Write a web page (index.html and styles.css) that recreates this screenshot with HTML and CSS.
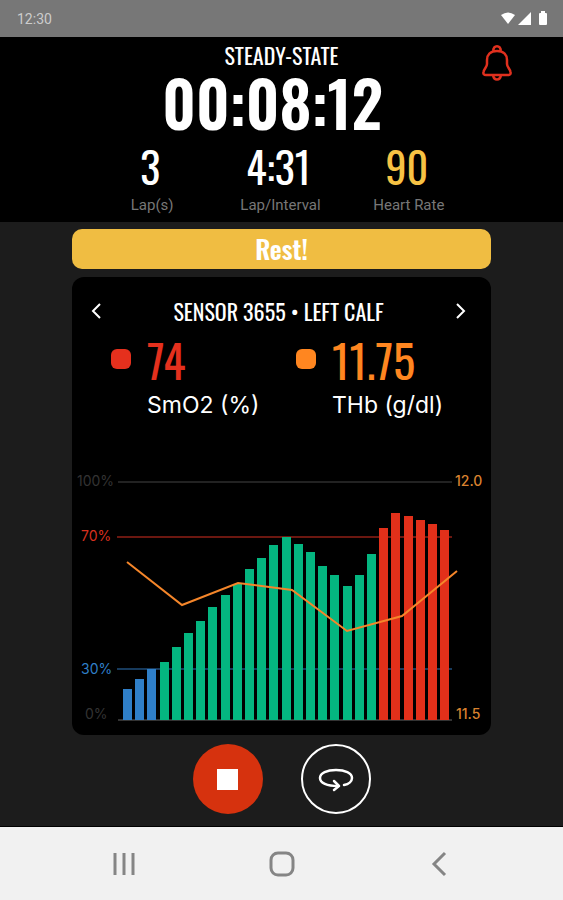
FILE: index.html
```html
<!DOCTYPE html>
<html lang="en">
<head>
    <meta charset="UTF-8">
    <meta name="viewport" content="width=device-width, initial-scale=1.0">
    <title>Steady-State</title>
    <link rel="stylesheet" href="styles.css">
</head>
<body>
    <div class="status-bar">
        <span>12:30</span>
        <svg width="50" height="16" viewBox="0 0 50 16" fill="#fff" aria-hidden="true">
            <path d="M0 4 Q7 -1 14 4 L7 13 Z"/>
            <path d="M30 1 V14 H17 Z"/>
            <path d="M38 3 Q38 2 39 2 H40 V0 H44 V2 H45 Q46 2 46 3 V13 Q46 14 45 14 H39 Q38 14 38 13 Z"/>
        </svg>
    </div>

    <header class="session">
        <button class="bell" aria-label="Alerts">
            <svg width="30" height="38" viewBox="0 0 30 38" fill="none" stroke="#e0301e" stroke-width="2.500" stroke-linejoin="round">
                <path d="M11.500 7 C10.500 0.500 19.500 0.500 18.500 7"/>
                <path d="M15 7 C8 7 5 11 5 16 V20 C5 23 2 25 1.500 28 C1 30 2 31 4 31 H26 C28 31 29 30 28.500 28 C28 25 25 23 25 20 V16 C25 11 22 7 15 7 Z"/>
                <path d="M11 31 C12 37 18 37 19 31"/>
            </svg>
        </button>
        <h1>STEADY-STATE</h1>
        <div class="timer">00:08:12</div>
        <div class="stats">
            <div class="stat">
                <div class="stat-value">3</div>
                <div class="stat-label">Lap(s)</div>
            </div>
            <div class="stat">
                <div class="stat-value">4:31</div>
                <div class="stat-label">Lap/Interval</div>
            </div>
            <div class="stat">
                <div class="stat-value heart">90</div>
                <div class="stat-label">Heart Rate</div>
            </div>
        </div>
    </header>

    <main>
        <div class="rest">Rest!</div>

        <section class="card">
            <div class="sensor">
                <button aria-label="Previous sensor">
                    <svg width="10" height="16" viewBox="0 0 10 16" fill="none" stroke="#fff" stroke-width="2"><path d="M9 1 L2 8 L9 15"/></svg>
                </button>
                <h2>SENSOR 3655 • LEFT CALF</h2>
                <button aria-label="Next sensor">
                    <svg width="10" height="16" viewBox="0 0 10 16" fill="none" stroke="#fff" stroke-width="2"><path d="M1 1 L8 8 L1 15"/></svg>
                </button>
            </div>

            <div class="metrics">
                <div class="metric smo2">
                    <span class="swatch"></span>
                    <span class="metric-value">74</span>
                    <span class="metric-label">SmO2 (%)</span>
                </div>
                <div class="metric thb">
                    <span class="swatch"></span>
                    <span class="metric-value">11.75</span>
                    <span class="metric-label">THb (g/dl)</span>
                </div>
            </div>

            <svg class="chart" viewBox="0 0 419 270" role="img" aria-label="SmO2 and THb over time">
                <g stroke-width="2">
                    <path d="M46 17 H380" stroke="#222"/>
                    <path d="M45 72 H380" stroke="#6b1710"/>
                    <path d="M45 204 H380" stroke="#173a5c"/>
                    <path d="M46 255 H380" stroke="#333"/>
                </g>
                <g fill="#2f7fc8">
                    <rect x="51" y="224" width="9" height="31"/>
                    <rect x="63" y="214" width="9" height="41"/>
                    <rect x="75" y="204" width="9" height="51"/>
                </g>
                <g fill="#04b680">
                    <rect x="88" y="197" width="9" height="58"/>
                    <rect x="100" y="182" width="9" height="73"/>
                    <rect x="112" y="168" width="9" height="87"/>
                    <rect x="124" y="156" width="9" height="99"/>
                    <rect x="136" y="142" width="9" height="113"/>
                    <rect x="149" y="130" width="9" height="125"/>
                    <rect x="161" y="119" width="9" height="136"/>
                    <rect x="173" y="104" width="9" height="151"/>
                    <rect x="185" y="93" width="9" height="162"/>
                    <rect x="197" y="80" width="9" height="175"/>
                    <rect x="210" y="72" width="9" height="183"/>
                    <rect x="222" y="79" width="9" height="176"/>
                    <rect x="234" y="87" width="9" height="168"/>
                    <rect x="246" y="101" width="9" height="154"/>
                    <rect x="258" y="110" width="9" height="145"/>
                    <rect x="271" y="121" width="9" height="134"/>
                    <rect x="283" y="110" width="9" height="145"/>
                    <rect x="295" y="89" width="9" height="166"/>
                </g>
                <g fill="#e2301a">
                    <rect x="307" y="63" width="9" height="192"/>
                    <rect x="319" y="48" width="9" height="207"/>
                    <rect x="332" y="51" width="9" height="204"/>
                    <rect x="344" y="55" width="9" height="200"/>
                    <rect x="356" y="59" width="9" height="196"/>
                    <rect x="368" y="65" width="9" height="190"/>
                </g>
                <polyline points="55,97 110,140 166,118 220,125 275,166 330,151 385,106" fill="none" stroke="#f5862a" stroke-width="2"/>
                <g class="axis">
                    <text x="5" y="21" fill="#333">100%</text>
                    <text x="9" y="76" fill="#d8301f">70%</text>
                    <text x="9" y="209" fill="#2f7fc8">30%</text>
                    <text x="13" y="254" fill="#333">0%</text>
                    <text class="thb-tick" x="383" y="21">12.0</text>
                    <text class="thb-tick" x="384" y="254">11.5</text>
                </g>
            </svg>
        </section>

        <div class="controls">
            <button class="stop" aria-label="Stop"><span></span></button>
            <button class="rotate" aria-label="Rotate view">
                <svg width="36" height="26" viewBox="0 0 36 26" fill="none" stroke="#fff" stroke-width="2.500" stroke-linecap="round" stroke-linejoin="round">
                    <path d="M26 19 C31 18 34 15 34 12 C34 7 27 4 18 4 C9 4 2 7 2 12 C2 17 9 20 20 20"/>
                    <path d="M16 15 L21 20 L16 24"/>
                </svg>
            </button>
        </div>
    </main>

    <nav class="nav-bar">
        <button aria-label="Recent apps">
            <svg width="26" height="26" viewBox="0 0 26 26" stroke="#858585" stroke-width="3"><path d="M4 2 V24 M13 2 V24 M22 2 V24"/></svg>
        </button>
        <button aria-label="Home">
            <svg width="26" height="26" viewBox="0 0 26 26" fill="none" stroke="#858585" stroke-width="3"><rect x="2" y="2" width="22" height="22" rx="7"/></svg>
        </button>
        <button aria-label="Back">
            <svg width="26" height="26" viewBox="0 0 26 26" fill="none" stroke="#858585" stroke-width="3"><path d="M19 2 L8 13 L19 24"/></svg>
        </button>
    </nav>
</body>
</html>
```

FILE: styles.css
```css
* {
    box-sizing: border-box;
}
body {
    margin: 0;
    min-height: 100vh;
    display: flex;
    flex-direction: column;
    background-color: #1c1c1c;
    color: #fff;
    font-family: Inter, Roboto, sans-serif;
}
button {
    padding: 0;
    border: none;
    background: none;
    color: inherit;
    display: flex;
    align-items: center;
    justify-content: center;
    cursor: pointer;
}
h1, h2, .timer, .stat-value, .rest, .metric-value {
    font-family: Oswald, "Liberation Sans Narrow", sans-serif;
    margin: 0;
}

/* top bar */
.status-bar {
    height: 37px;
    padding: 0 12px 0 17px;
    display: flex;
    align-items: center;
    justify-content: space-between;
    background-color: #777;
    color: #ccc;
    font-family: Roboto, sans-serif;
    font-size: 14px;
}
.session {
    position: relative;
    padding: 6px 0;
    background-color: #000;
    text-align: center;
}
.bell {
    position: absolute;
    top: 7px;
    right: 51px;
}
h1 {
    font-size: 22px;
    line-height: 24px;
    font-weight: normal;
}
.timer {
    padding-right: 18px;
    font-size: 62px;
    line-height: 70px;
    font-weight: 600;
}
.stats {
    display: grid;
    grid-template-columns: repeat(3, 1fr);
    margin: 0 90px 0 88px;
}
.stat-value {
    padding-right: 4px;
    font-size: 42px;
    line-height: 58px;
}
.heart {
    color: #f7c244;
}
.stat-label {
    color: #777;
    font-family: Roboto, sans-serif;
    font-size: 15px;
    line-height: 21px;
}

/* content */
main {
    flex: 1;
    padding: 7px 72px 0;
}
.rest {
    margin-bottom: 8px;
    border-radius: 10px;
    background-color: #f0bd42;
    font-size: 26px;
    line-height: 40px;
    font-weight: 600;
    text-align: center;
}
.card {
    border-radius: 12px;
    background-color: #000;
}
.sensor {
    display: flex;
    align-items: center;
    justify-content: space-between;
    padding: 22px 25px 0 19px;
}
h2 {
    font-size: 22px;
    line-height: 24px;
    font-weight: normal;
}
.metrics {
    display: grid;
    grid-template-columns: 185px 1fr;
    padding: 12px 0 37px 39px;
}
.metric {
    display: grid;
    grid-template-columns: 20px 1fr;
    column-gap: 16px;
    align-items: center;
}
.swatch {
    width: 20px;
    height: 20px;
    border-radius: 6px;
    background-color: currentColor;
}
.metric-value {
    font-size: 46px;
    line-height: 48px;
}
.metric-label {
    grid-column: 2;
    color: #fff;
    font-size: 23px;
    line-height: 45px;
}
.smo2 {
    color: #e5301d;
}
.thb {
    color: #ff8620;
}
.chart {
    display: block;
    width: 100%;
}
.axis {
    font-size: 14px;
}
.thb-tick {
    fill: #d9822f;
    font-weight: 500;
}

/* bottom */
.controls {
    display: flex;
    justify-content: center;
    gap: 38px;
    padding: 9px 0 12px;
}
.stop, .rotate {
    width: 70px;
    height: 70px;
    border-radius: 50%;
}
.stop {
    background-color: #d6320e;
}
.stop span {
    width: 21px;
    height: 21px;
    background-color: #fff;
}
.rotate {
    border: 2px solid #fff;
}
.nav-bar {
    height: 74px;
    padding: 0 111px;
    border-top: 1px solid #000;
    display: flex;
    align-items: center;
    justify-content: space-between;
    background-color: #f1f1f1;
}
```
